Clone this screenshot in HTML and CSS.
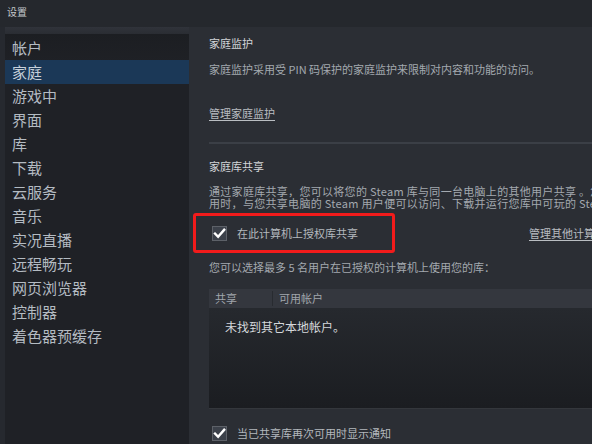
FILE: index.html
```html
<!DOCTYPE html>
<html lang="zh-CN">
<head>
<meta charset="utf-8">
<title>设置</title>
<link rel="stylesheet" href="styles.css">
</head>
<body>
<div class="window">
  <div class="titlebar">设置</div>
  <div class="main">
    <nav class="sidebar">
      <div class="sidebar-top"></div>
      <ul class="nav">
        <li>帐户</li>
        <li class="active">家庭</li>
        <li>游戏中</li>
        <li>界面</li>
        <li>库</li>
        <li>下载</li>
        <li>云服务</li>
        <li>音乐</li>
        <li>实况直播</li>
        <li>远程畅玩</li>
        <li>网页浏览器</li>
        <li>控制器</li>
        <li>着色器预缓存</li>
      </ul>
    </nav>
    <section class="content">
      <h2 class="heading first">家庭监护</h2>
      <p class="desc">家庭监护采用受 PIN 码保护的家庭监护来限制对内容和功能的访问。</p>
      <a class="link manage-parental">管理家庭监护</a>
      <div class="divider"></div>
      <h2 class="heading">家庭库共享</h2>
      <p class="desc multi"><span class="line">通过家庭库共享，您可以将您的 Steam 库与同一台电脑上的其他用户共享 。您一旦授权了某台计算机，当您的库未在使</span><span class="line">用时，与您共享电脑的 Steam 用户便可以访问、下载并运行您库中可玩的 Steam 游戏。</span></p>
      <div class="auth-row">
        <label class="check">
          <span class="box"><svg viewBox="0 0 15 15" width="15" height="15"><path d="M3 7.6 L6.1 10.8 L12.2 3.8" fill="none" stroke="#ffffff" stroke-width="2.4" stroke-linecap="square"/></svg></span>
          <span class="check-label">在此计算机上授权库共享</span>
        </label>
        <a class="link">管理其他计算机</a>
      </div>
      <p class="desc users">您可以选择最多 5 名用户在已授权的计算机上使用您的库：</p>
      <div class="table">
        <div class="thead">
          <div class="th col-share">共享</div>
          <div class="th col-acc">可用帐户</div>
        </div>
        <div class="tbody">
          <div class="empty">未找到其它本地帐户。</div>
        </div>
      </div>
      <label class="check notify">
        <span class="box"><svg viewBox="0 0 15 15" width="15" height="15"><path d="M3 7.6 L6.1 10.8 L12.2 3.8" fill="none" stroke="#ffffff" stroke-width="2.4" stroke-linecap="square"/></svg></span>
        <span class="check-label">当已共享库再次可用时显示通知</span>
      </label>
    </section>
  </div>
  <div class="highlight"></div>
</div>
</body>
</html>
```
FILE: styles.css
```css
* { box-sizing: border-box; }
html, body {
  margin: 0;
  padding: 0;
  width: 592px;
  height: 444px;
  overflow: hidden;
  background: #272a30;
  font-family: "Noto Sans CJK SC", "Noto Sans", "Liberation Sans", sans-serif;
}
.window {
  position: relative;
  width: 592px;
  height: 444px;
  display: flex;
  flex-direction: column;
  background: #26292f;
}
.titlebar {
  height: 27px;
  padding-left: 7px;
  font-size: 10px;
  line-height: 24px;
  color: #c3c7cb;
  background: #25282d;
}
.main {
  flex: 1;
  display: flex;
  min-height: 0;
}
.sidebar {
  margin-left: 5px;
  width: 184px;
  background: #1f2126;
  display: flex;
  flex-direction: column;
}
.sidebar-top {
  height: 7px;
  background: linear-gradient(#30333a, #2a2d33);
}
.nav {
  list-style: none;
  margin: 0;
  padding: 2px 0 0 0;
  background: linear-gradient(#1c1e22 0, #1f2126 30px);
  flex: 1;
}
.nav li {
  height: 24px;
  line-height: 24px;
  padding-left: 7px;
  font-size: 15px;
  color: #b4bbc2;
}
.nav li.active {
  background: #1b3857;
  color: #c6d0da;
}
.content {
  flex: 1;
  min-width: 0;
  overflow: hidden;
  background: #2b2e34;
  padding-left: 20px;
  display: flex;
  flex-direction: column;
  align-items: flex-start;
}
.heading {
  margin: 14px 0 0 0;
  font-size: 11px;
  line-height: 16px;
  font-weight: normal;
  color: #d2d5d8;
}
.heading.first { margin-top: 8px; }
.desc {
  margin: 10px 0 0 0;
  font-size: 11px;
  line-height: 16px;
  color: #a3a9af;
  white-space: nowrap;
}
.desc.multi {
  margin-top: 11px;
  line-height: 12px;
  letter-spacing: 0.3px;
}
.desc.multi .line { display: block; }
.link {
  font-size: 11px;
  line-height: 16px;
  color: #b9bdc1;
  text-decoration: underline;
  text-underline-offset: 2px;
  white-space: nowrap;
}
.manage-parental { margin-top: 28px; }
.divider {
  margin-top: 21px;
  height: 2px;
  width: 420px;
  background: #3b3f46;
}
.auth-row {
  margin-top: 16px;
  display: grid;
  grid-template-columns: 320px auto;
  align-items: center;
  width: 420px;
}
.check {
  display: flex;
  align-items: center;
  gap: 10px;
  padding-left: 3px;
}
.box {
  width: 15px;
  height: 15px;
  background: #3c414a;
  border: 1px solid #5d6168;
  display: flex;
  align-items: center;
  justify-content: center;
}
.box svg { display: block; margin: -1px; }
.check-label {
  font-size: 11px;
  line-height: 16px;
  color: #b3b8bd;
  white-space: nowrap;
}
.desc.users { margin-top: 18px; }
.table {
  margin-top: 14px;
  width: 420px;
  display: flex;
  flex-direction: column;
}
.thead {
  height: 19px;
  display: flex;
  align-items: center;
  background: #34373e;
}
.th {
  font-size: 11px;
  line-height: 19px;
  color: #a0a6ac;
  padding-left: 6px;
}
.col-share {
  width: 64px;
  height: 15px;
  line-height: 15px;
  border-right: 1px solid #282b30;
}
.tbody {
  height: 101px;
  background: linear-gradient(#26292e, #1b1d21);
  border-bottom: 1px solid #34373c;
  padding: 11px 0 0 16px;
}
.empty {
  font-size: 12px;
  line-height: 16px;
  color: #d5d8db;
}
.check.notify { margin-top: 16px; }
.highlight {
  position: absolute;
  left: 193px;
  top: 213px;
  width: 202px;
  height: 40px;
  border: 3px solid #f21b1b;
  border-radius: 3px;
  pointer-events: none;
}
```
